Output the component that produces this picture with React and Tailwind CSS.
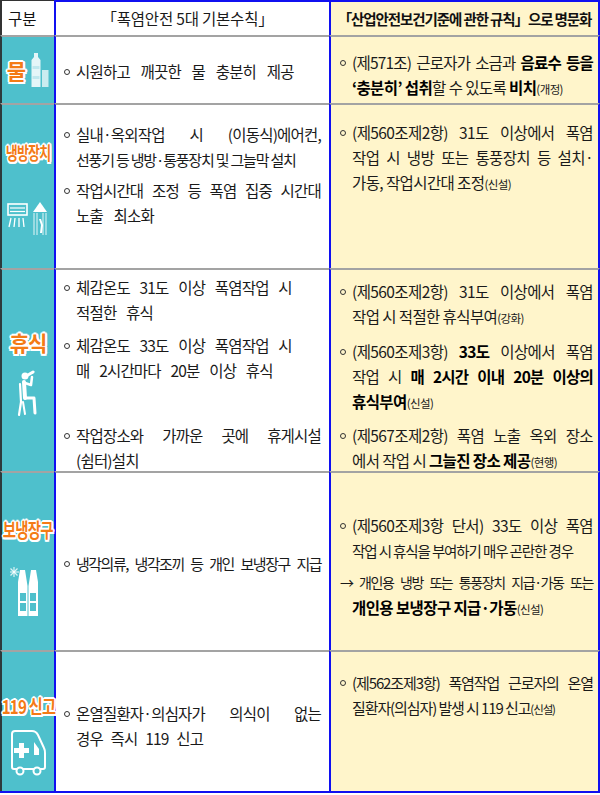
const J = "text-justify [text-align-last:justify]";
const B = "font-bold text-black";
const S = "text-[11.5px]";

function Item({ lines, just = true, className = "" }) {
  return (
    <div className={"flex " + className}>
      <div className="w-[12px] h-[25px] flex items-center shrink-0">
        <span className="w-[6px] h-[6px] rounded-full border border-[#333]" />
      </div>
      <div className="flex-1 min-w-0">
        {lines.map((l, i) => (
          <div key={i} className={"whitespace-nowrap " + (just && i < lines.length - 1 ? J : "")}>
            {l}
          </div>
        ))}
      </div>
    </div>
  );
}

const labelCls =
  "font-bold text-[#f47b16] leading-none whitespace-nowrap [text-shadow:-1.5px_-1.5px_0_#fff,1.5px_-1.5px_0_#fff,-1.5px_1.5px_0_#fff,1.5px_1.5px_0_#fff,0_2px_0_#fff,0_-2px_0_#fff,2px_0_0_#fff,-2px_0_0_#fff]";

function Bottle() {
  return (
    <svg width="20" height="36" viewBox="0 0 20 36">
      <path d="M5 1h4v4l2.5 3v27H2.5V8L5 5z" fill="#fff" fillOpacity="0.85" />
      <rect x="3.5" y="14" width="7" height="3" fill="#bfe8ee" />
      <rect x="3.5" y="24" width="7" height="3" fill="#bfe8ee" />
      <rect x="13" y="18" width="6.5" height="17" fill="#fff" fillOpacity="0.7" />
    </svg>
  );
}

function AirCon() {
  return (
    <svg width="44" height="36" viewBox="0 0 44 36">
      <rect x="2" y="3" width="19" height="11" fill="none" stroke="#fff" strokeWidth="1.6" />
      <line x1="4" y1="7" x2="19" y2="7" stroke="#fff" strokeWidth="1.2" />
      <line x1="4" y1="10.5" x2="19" y2="10.5" stroke="#fff" strokeWidth="1.2" />
      <g stroke="#fff" strokeWidth="1.3">
        <line x1="5" y1="17" x2="3" y2="26" />
        <line x1="9" y1="17" x2="8" y2="26" />
        <line x1="13" y1="17" x2="13" y2="26" />
        <line x1="17" y1="17" x2="18" y2="26" />
      </g>
      <path d="M34 1 L41 11 H27 Z" fill="#fff" />
      <g stroke="#fff" strokeWidth="1" strokeOpacity="0.85">
        <line x1="28" y1="12" x2="28" y2="34" />
        <line x1="31" y1="12" x2="31" y2="34" />
        <line x1="37" y1="12" x2="37" y2="34" />
        <line x1="40" y1="12" x2="40" y2="34" />
      </g>
      <path d="M33 18 l2 6 l-1 8 h2 l1 -8 l-2 -6z" fill="#fff" />
    </svg>
  );
}

function Rest() {
  return (
    <svg width="24" height="50" viewBox="0 0 24 50" fill="none" stroke="#fff" strokeLinecap="round" strokeLinejoin="round">
      <circle cx="9" cy="7" r="3.5" fill="#fff" stroke="none" />
      <line x1="12" y1="6" x2="17" y2="3" strokeWidth="3" />
      <path d="M9 14 L15 16 L16 8" strokeWidth="2.5" />
      <path d="M8 13 L9 29" strokeWidth="4" />
      <path d="M9 29 L18 29 L19 44" strokeWidth="3" />
      <path d="M4 15 L5 33 L3 46" strokeWidth="2.2" />
      <path d="M7 33 L9 45" strokeWidth="2" />
    </svg>
  );
}

function Vest() {
  return (
    <svg width="36" height="54" viewBox="0 0 36 54">
      <g stroke="#fff" strokeWidth="1.2" strokeOpacity="0.8">
        <line x1="4" y1="3" x2="4" y2="13" />
        <line x1="-1" y1="8" x2="9" y2="8" />
        <line x1="0.5" y1="4.5" x2="7.5" y2="11.5" />
        <line x1="7.5" y1="4.5" x2="0.5" y2="11.5" />
      </g>
      <path d="M10 6 L15 6 L17.5 22 V52 H8 V18 Z" fill="#fff" />
      <path d="M26 6 L21 6 L18.5 22 V52 H28 V18 Z" fill="#fff" />
      <rect x="10" y="29" width="6" height="8" fill="#4ec0cc" />
      <rect x="10" y="39" width="6" height="8" fill="#4ec0cc" />
      <rect x="20" y="29" width="6" height="8" fill="#4ec0cc" />
      <rect x="20" y="39" width="6" height="8" fill="#4ec0cc" />
    </svg>
  );
}

function Ambulance() {
  return (
    <svg width="40" height="52" viewBox="0 0 40 52">
      <path
        d="M7 4 H24 Q28 4 30 8 L36 21 Q37 23 37 26 V40 Q37 42 35 42 H6 Q4 42 4 40 V7 Q4 4 7 4 Z"
        fill="none"
        stroke="#fff"
        strokeWidth="2"
      />
      <rect x="11" y="16" width="5" height="15" fill="#fff" />
      <rect x="6" y="21" width="15" height="5" fill="#fff" />
      <path d="M26 15 L31 22 V28 H26 Z" fill="#fff" />
      <circle cx="12" cy="44" r="3.5" fill="#4ec0cc" stroke="#fff" strokeWidth="2" />
      <circle cx="29" cy="44" r="3.5" fill="#4ec0cc" stroke="#fff" strokeWidth="2" />
    </svg>
  );
}

function Row({ h, c1, c2, c3, p2, p3, c1cls = "" }) {
  return (
    <div className={"flex " + h}>
      <div
        className={
          "w-[54px] shrink-0 bg-[#4ec0cc] border-l-2 border-l-[#2d3a3c] border-t-2 border-t-[#a3a3a3] flex flex-col items-center " +
          c1cls
        }
      >
        {c1}
      </div>
      <div
        className={
          "w-[275px] shrink-0 bg-white border-l-2 border-l-[#1010f0] border-t-2 border-t-[#a3a3a3] pl-[8px] pr-[8px] text-[15.5px] tracking-[-0.8px] " +
          p2
        }
      >
        {c2}
      </div>
      <div
        className={
          "w-[271px] shrink-0 bg-[#fff5cb] border-l-2 border-l-[#1010f0] border-r-2 border-r-[#1010f0] border-t-2 border-t-[#a3a3a3] pl-[9px] pr-[5px] text-[15.5px] tracking-[-0.6px] " +
          p3
        }
      >
        {c3}
      </div>
    </div>
  );
}

export default function App() {
  return (
    <div className="w-[600px] h-[795px] bg-white font-['Noto_Sans_CJK_KR','Noto_Sans',sans-serif] text-[14px] leading-[25px] text-[#1a1a1a] overflow-hidden">
      {/* HEADER */}
      <div className="flex h-[35px]">
        <div className="w-[54px] shrink-0 border-l-2 border-t border-[#333] flex items-center pl-[6px] text-[15.5px] text-[#111]">
          구분
        </div>
        <div className="w-[275px] shrink-0 border-l-2 border-t-2 border-[#1010f0] flex items-center justify-center pr-[10px] text-[15.5px] tracking-[-0.2px]">
          「폭염안전 5대 기본수칙」
        </div>
        <div className="w-[271px] shrink-0 bg-[#fff5cb] border-l-2 border-r-2 border-t-2 border-[#1010f0] flex items-center justify-center text-[14.5px] font-semibold tracking-[-1.1px] text-[#111] whitespace-nowrap">
          「산업안전보건기준에 관한 규칙」으로 명문화
        </div>
      </div>

      {/* 물 */}
      <Row
        h="h-[68px]"
        c1cls="flex-row justify-center gap-[3px]"
        c1={
          <>
            <span className={labelCls + " text-[21px]"}>물</span>
            <Bottle />
          </>
        }
        p2="pt-[22px]"
        c2={<Item lines={[<span className="[word-spacing:8px]">시원하고 깨끗한 물 충분히 제공</span>]} />}
        p3="pt-[13px]"
        c3={
          <Item
            lines={[
              <span className="tracking-[-0.8px]">
                (제571조) 근로자가 소금과 <span className={B}>음료수 등을</span>
              </span>,
              <>
                <span className={B}>‘충분히’ 섭취</span>할 수 있도록 <span className={B}>비치</span>
                <span className={S}>(개정)</span>
              </>,
            ]}
          />
        }
      />

      {/* 냉방장치 */}
      <Row
        h="h-[165px]"
        c1cls="pt-[38px] gap-[40px]"
        c1={
          <>
            <span className={labelCls + " text-[18px] inline-block scale-x-[0.72] tracking-[-1px]"}>냉방장치</span>
            <AirCon />
          </>
        }
        p2="pt-[17px]"
        c2={
          <>
            <Item
              lines={[
                "실내·옥외작업 시 (이동식)에어컨,",
                <span className="text-[15px] tracking-[-1.2px]">선풍기 등 냉방·통풍장치 및 그늘막 설치</span>,
              ]}
            />
            <Item
              className="mt-[6px]"
              lines={["작업시간대 조정 등 폭염 집중 시간대", <span className="[word-spacing:8px]">노출 최소화</span>]}
            />
          </>
        }
        p3="pt-[15px]"
        c3={
          <Item
            lines={[
              "(제560조제2항) 31도 이상에서 폭염",
              "작업 시 냉방 또는 통풍장치 등 설치·",
              <>
                가동, 작업시간대 조정<span className={S}>(신설)</span>
              </>,
            ]}
          />
        }
      />

      {/* 휴식 */}
      <Row
        h="h-[203px]"
        c1cls="pt-[62px] gap-[16px]"
        c1={
          <>
            <span className={labelCls + " text-[21px] tracking-[-1px]"}>휴식</span>
            <Rest />
          </>
        }
        p2="pt-[5px]"
        c2={
          <>
            <Item
              just={false}
              className="[word-spacing:7px]"
              lines={["체감온도 31도 이상 폭염작업 시", "적절한 휴식"]}
            />
            <Item
              just={false}
              className="mt-[8px] [word-spacing:7px]"
              lines={["체감온도 33도 이상 폭염작업 시", "매 2시간마다 20분 이상 휴식"]}
            />
            <Item className="mt-[40px]" lines={["작업장소와 가까운 곳에 휴게시설", "(쉼터)설치"]} />
          </>
        }
        p3="pt-[9px]"
        c3={
          <>
            <Item
              lines={[
                "(제560조제2항) 31도 이상에서 폭염",
                <>
                  작업 시 적절한 휴식부여<span className={S}>(강화)</span>
                </>,
              ]}
            />
            <Item
              className="mt-[8px]"
              lines={[
                <>
                  (제560조제3항) <span className={B}>33도</span> 이상에서 폭염
                </>,
                <span className="tracking-[-0.8px]">
                  작업 시 <span className={B}>매 2시간 이내 20분 이상의</span>
                </span>,
                <>
                  <span className={B}>휴식부여</span>
                  <span className={S}>(신설)</span>
                </>,
              ]}
            />
            <Item
              className="mt-[7px]"
              lines={[
                "(제567조제2항) 폭염 노출 옥외 장소",
                <>
                  에서 작업 시 <span className={B}>그늘진 장소 제공</span>
                  <span className={S}>(현행)</span>
                </>,
              ]}
            />
          </>
        }
      />

      {/* 보냉장구 */}
      <Row
        h="h-[179px]"
        c1cls="pt-[47px] gap-[24px]"
        c1={
          <>
            <span className={labelCls + " text-[20px] inline-block scale-x-[0.72] tracking-[-1px]"}>보냉장구</span>
            <Vest />
          </>
        }
        p2="pt-[78px]"
        c2={
          <div className="flex">
            <div className="w-[12px] h-[25px] flex items-center shrink-0">
              <span className="w-[6px] h-[6px] rounded-full border border-[#333]" />
            </div>
            <div className={"flex-1 whitespace-nowrap text-[15px] tracking-[-1.5px] " + J}>
              냉각의류, 냉각조끼 등 개인 보냉장구 지급
            </div>
          </div>
        }
        p3="pt-[40px]"
        c3={
          <>
            <Item
              lines={[
                "(제560조제3항 단서) 33도 이상 폭염",
                <span className="text-[14.5px] tracking-[-1.1px]">작업 시 휴식을 부여하기 매우 곤란한 경우</span>,
              ]}
            />
            <div className="mt-[7px]">
              <div className={J + " whitespace-nowrap text-[14px] tracking-[-1.4px]"}>→ 개인용 냉방 또는 통풍장치 지급·가동 또는</div>
              <div className="pl-[12px] whitespace-nowrap">
                <span className={B}>개인용 보냉장구 지급·가동</span>
                <span className={S}>(신설)</span>
              </div>
            </div>
          </>
        }
      />

      {/* 119 신고 */}
      <Row
        h="h-[143px] border-b-2 border-b-[#1010f0]"
        c1cls="pt-[44px] gap-[12px]"
        c1={
          <>
            <span className={labelCls + " text-[19px] inline-block scale-x-[0.8] tracking-[-1px]"}>119 신고</span>
            <Ambulance />
          </>
        }
        p2="pt-[49px]"
        c2={
          <Item
            lines={["온열질환자·의심자가 의식이 없는", <span className="[word-spacing:5px]">경우 즉시 119 신고</span>]}
          />
        }
        p3="pt-[18px]"
        c3={
          <Item
            lines={[
              <span className="text-[15px] tracking-[-1.1px]">(제562조제3항) 폭염작업 근로자의 온열</span>,
              <span className="text-[15px] tracking-[-1.1px]">
                질환자(의심자) 발생 시 119 신고<span className={S}>(신설)</span>
              </span>,
            ]}
          />
        }
      />
    </div>
  );
}
